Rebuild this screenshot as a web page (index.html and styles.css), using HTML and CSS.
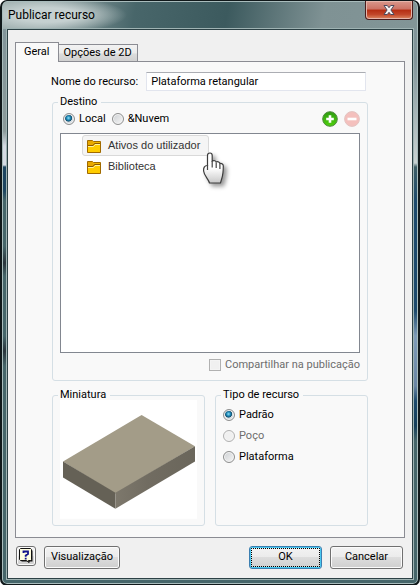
FILE: index.html
```
<!DOCTYPE html>
<html lang="pt">
<head>
  <meta charset="UTF-8">
  <title>Publicar recurso</title>
  <link rel="stylesheet" href="styles.css">
</head>
<body>
  <form class="window" onsubmit="return false">
    <header class="titlebar">
      <h1>Publicar recurso</h1>
      <button type="button" class="close" aria-label="Fechar">
        <svg width="12" height="10" viewBox="0 0 12 10"><path d="M1 .5h3.300L6 2.700 7.700.5H11L7.900 5 11 9.500H7.700L6 7.300 4.300 9.500H1L4.100 5z" fill="#f4f4f4" stroke="#4e4a5c"/></svg>
      </button>
    </header>

    <main class="client">
      <nav class="tabs">
        <button type="button" class="tab active">Geral</button>
        <button type="button" class="tab">Opções de 2D</button>
      </nav>

      <div class="panel">
        <div class="name-row">
          <label for="name">Nome do recurso:</label>
          <input type="text" id="name" value="Plataforma retangular">
        </div>

        <fieldset class="target">
          <legend>Destino</legend>
          <div class="target-bar">
            <label class="option"><input type="radio" name="target" checked>Local</label>
            <label class="option"><input type="radio" name="target">&amp;Nuvem</label>
            <button type="button" class="round add" aria-label="Adicionar">
              <svg width="16" height="16" viewBox="0 0 16 16">
                <defs><linearGradient id="green" x2="0" y2="1"><stop stop-color="#2f9c12"/><stop offset="1" stop-color="#4fd00c"/></linearGradient></defs>
                <circle cx="8" cy="8" r="7.300" fill="url(#green)" stroke="#4d8a3c"/>
                <path d="M8 4.200v7.600M4.200 8h7.600" stroke="#fff" stroke-width="2.600"/>
              </svg>
            </button>
            <button type="button" class="round" aria-label="Remover" disabled>
              <svg width="16" height="16" viewBox="0 0 16 16">
                <circle cx="8" cy="8" r="7.400" fill="#f4c0bd" stroke="#e3c4c2"/>
                <path d="M3.500 8h9" stroke="#fff" stroke-width="2.600"/>
              </svg>
            </button>
          </div>
          <ul class="list">
            <li class="hover">
              <svg width="14" height="14" viewBox="0 0 14 14"><path d="M.5 1.500h5l1 1h7v11H.5z" fill="#fc0" stroke="#a06a00"/><path d="M1 2h4.500l1 1.500H13v2H7.500L6.500 7H1z" fill="#e8a800"/><path d="M1 7.500h5.500l1.500-2h5" fill="none" stroke="#fff3a0"/><path d="M1 6.500h5l1.500-2H13" fill="none" stroke="#8c5a00"/></svg>
              Ativos do utilizador
              <svg class="hand" width="28" height="38" viewBox="0 0 28 38">
                <defs><linearGradient id="skin" x2="0" y2="1"><stop offset=".5" stop-color="#fff"/><stop offset="1" stop-color="#c8c8c8"/></linearGradient></defs>
                <path d="M8 3c1.600 0 2.200 1 2.200 2.600V11c2-.9 3.600-.2 4 1 2-.7 3.300 0 3.700 1.500 2-.3 3.400.5 3.400 2.500 0 6-.2 8.500-1.500 12.500L18.500 33H7.500C6.500 29 2 25.500 1.600 21c-.2-3 .6-5.500 3.900-5.500V5.600C5.500 4 6.300 3 8 3z" fill="url(#skin)" stroke="#3c3c3c" stroke-width="1.200"/>
                <path d="M5.500 15v5M10.200 11v6.500M14.200 12.500v5.500M17.900 14v5" fill="none" stroke="#444" stroke-width="1.200"/>
              </svg>
            </li>
            <li>
              <svg width="14" height="14" viewBox="0 0 14 14"><path d="M.5 1.500h5l1 1h7v11H.5z" fill="#fc0" stroke="#a06a00"/><path d="M1 2h4.500l1 1.500H13v2H7.500L6.500 7H1z" fill="#e8a800"/><path d="M1 7.500h5.500l1.500-2h5" fill="none" stroke="#fff3a0"/><path d="M1 6.500h5l1.500-2H13" fill="none" stroke="#8c5a00"/></svg>
              Biblioteca
            </li>
          </ul>
          <div class="share">
            <label class="option off"><input type="checkbox" disabled>Compartilhar na publicação</label>
          </div>
        </fieldset>

        <div class="columns">
          <fieldset class="thumb">
            <legend>Miniatura</legend>
            <svg viewBox="0 0 136 118">
              <defs>
                <linearGradient id="front" x2="1" y2="0"><stop stop-color="#7d786c"/><stop offset=".4" stop-color="#716c61"/><stop offset="1" stop-color="#6a665b"/></linearGradient>
              </defs>
              <path fill="#fff" d="M0 0h136v118H0z"/>
              <path d="M3 61 81 15l53 31-79 47z" fill="#a39c88"/>
              <path d="M3 61v16l52 31V92z" fill="#656156"/>
              <path d="M55 92v16l79-47V46z" fill="url(#front)"/>
            </svg>
          </fieldset>
          <fieldset class="type">
            <legend>Tipo de recurso</legend>
            <label class="option"><input type="radio" name="type" checked>Padrão</label>
            <label class="option off"><input type="radio" name="type" disabled>Poço</label>
            <label class="option"><input type="radio" name="type">Plataforma</label>
          </fieldset>
        </div>
      </div>

      <footer class="actions">
        <button type="button" class="btn help" aria-label="Ajuda">
          <svg width="14" height="15" viewBox="0 0 14 15"><path d="M2.500 2.500h11v11h-3v1l-2-1h-6z" fill="#111"/><path d="M1.500.5h10l1 1v10l-1 1h-2l.5 2-2.500-2h-6l-1-1v-10z" fill="#fffde0" stroke="#111"/><path d="M4.500 5V3.500h4.500v2.500L6.700 7.500v1.200M6.700 9.700v1.800" fill="none" stroke="#14148c" stroke-width="1.800"/></svg>
        </button>
        <button type="button" class="btn preview">Visualização</button>
        <button type="submit" class="btn ok">OK</button>
        <button type="button" class="btn">Cancelar</button>
      </footer>
    </main>
  </form>
</body>
</html>
```
FILE: styles.css
```
* {
  box-sizing: border-box;
}
body {
  margin: 0;
  background: #fff;
  color: #000;
  font: 11px/16px Roboto, "Liberation Sans", sans-serif;
}
button, input {
  font: inherit;
  color: inherit;
  margin: 0;
}
svg {
  display: block;
}

/* window frame */
.window {
  display: flex;
  flex-direction: column;
  min-height: 100vh;
  padding: 0 5px 5px;
  border: 2px solid #10181a;
  border-top-width: 1px;
  border-radius: 7px;
  box-shadow: inset 0 0 0 1px #a9bcbc;
  background:
    radial-gradient(ellipse 80px 18px at 45px 14px, #c5d0d0 40%, transparent) no-repeat 0 0 / 100% 28px,
    linear-gradient(100deg, #9aabab 10%, #48666a 32%, #3c5a5e 54%, #7f9294 77%, #829597) no-repeat 0 0 / 100% 28px,
    linear-gradient(#82959a 29px, #8b9a9a 130px, #d5dbe4 145px, #d5dbe4 164px, #1d4560 166px, #1d4560 190px, #46666a 200px, #46666a 245px, #2a353c 262px, #46666a 275px, #46666a 335px, #2a353c 350px, #46666a 365px) no-repeat 0 0 / 7px 100%,
    linear-gradient(#82959a 60px, #c9d2d2 162px, #3e5e66 166px, #1d4a6c 200px, #1d4a6c 310px, #7f9cb8 335px, #6a86a4 385px, #1d4a6c 400px, #163f5a 425px, #46666a 440px) no-repeat 100% 0 / 7px 100%,
    #46666a;
}
.titlebar {
  display: flex;
  justify-content: space-between;
  height: 28px;
}
.titlebar h1 {
  margin: 6px 0 0 1px;
  font-size: 12px;
  line-height: 16px;
  font-weight: normal;
}
.close {
  display: flex;
  align-items: center;
  justify-content: center;
  width: 48px;
  height: 19px;
  padding: 0;
  border: 1px solid #4a1c1c;
  border-top: 0;
  border-radius: 0 0 4px 4px;
  background: linear-gradient(#d9988c, #cc7264 45%, #b52d12 50%, #c2472a 75%, #dc8a64);
  box-shadow: inset 0 0 0 1px #e6b5aa;
}
.client {
  flex: 1;
  display: flex;
  flex-direction: column;
  padding: 12px 7px 9px;
  border: 1px solid #2c4145;
  background: #f0f0f0;
  box-shadow: 0 0 0 1px #9fb3b3;
}

/* tabs */
.tabs {
  display: flex;
  align-items: flex-end;
  height: 19px;
}
.tab {
  height: 17px;
  padding: 0 5px;
  border: 1px solid #8b8c93;
  border-bottom: 0;
  background: linear-gradient(#f2f2f2, #ebebeb 50%, #dcdcdc 55%, #d0d0d0);
  line-height: 16px;
}
.tab.active {
  position: relative;
  height: 20px;
  margin: 0 -1px -1px 0;
  padding: 0 8px 2px;
  background: #f9f9f9;
}
.panel {
  flex: 1;
  padding: 10px 36px 11px;
  border: 1px solid #8b8c93;
  background: #f9f9f9;
}
.name-row {
  display: flex;
  align-items: center;
  justify-content: flex-end;
  gap: 8px;
  padding-right: 2px;
  margin-bottom: 3px;
  white-space: nowrap;
}
.name-row input {
  flex: none;
  width: 70%;
  height: 19px;
  padding: 0 4px;
  border: 1px solid #e2e5ee;
  border-top-color: #abadb3;
  background: #fff;
}

/* group boxes */
fieldset {
  min-width: 0;
  margin: 0;
  padding: 0 7px;
  border: 1px solid #d5dfe5;
  border-radius: 3px;
}
legend {
  padding: 0 4px 0 2px;
  margin-left: -2px;
}
.target {
  padding-bottom: 7px;
}
.target-bar {
  display: flex;
  align-items: center;
  gap: 6px;
  height: 18px;
  padding-left: 3px;
}
.option {
  display: flex;
  align-items: center;
  gap: 4px;
}
.option.off {
  color: #6d6d6d;
}
input[type="radio"], input[type="checkbox"] {
  appearance: none;
  width: 12px;
  height: 12px;
  border: 1px solid #8e8f8f;
  background: linear-gradient(135deg, #cdd0d3, #f6f6f6);
  box-shadow: inset 0 0 0 1px #f4f4f4;
}
input[type="radio"] {
  border-radius: 50%;
}
input[type="radio"]:checked {
  background: radial-gradient(circle at 45% 40%, #8fe0f8, #1c86b4 25%, #14506f 40%, #d5dbe0 48%);
}
input:disabled {
  border-color: #b1b1b1;
  background: #f0f0f0;
}
.round {
  padding: 0;
  border: 0;
  background: none;
}
.add {
  margin-left: auto;
}
.list {
  min-height: 220px;
  margin: 5px 0 4px;
  padding: 1px 0;
  border: 1px solid #828790;
  background: #fff;
  list-style: none;
  color: #333;
  font: 11px/19px "Liberation Sans", Arial, sans-serif;
}
.list li {
  position: relative;
  display: flex;
  align-items: center;
  gap: 7px;
  width: 127px;
  height: 21px;
  margin-left: 21px;
  padding-left: 4px;
  border: 1px solid transparent;
  border-radius: 3px;
  white-space: nowrap;
}
.list .hover {
  border-color: #d9d9d9;
  background: #f5f5f5;
}
.hand {
  position: absolute;
  left: 119px;
  top: 14px;
  filter: drop-shadow(3px 3px 2px #999);
}
.share {
  display: flex;
  justify-content: flex-end;
}
.columns {
  display: grid;
  grid-template-columns: 1fr 1fr;
  gap: 10px;
  margin-top: 6px;
}
.thumb svg {
  width: 100%;
  margin: -3px 0 6px;
}
.thumb legend {
  position: relative;
}
.type .option {
  height: 21px;
}
.type legend + .option {
  margin-top: 1px;
}

/* bottom buttons */
.actions {
  display: flex;
  align-items: flex-start;
  gap: 8px;
  padding: 8px 2px 0 1px;
}
.btn {
  width: 73px;
  height: 23px;
  padding: 0;
  border: 1px solid #707070;
  border-radius: 3px;
  background: linear-gradient(#f3f3f3, #ebebeb 49%, #dddddd 50%, #cfcfcf);
  box-shadow: inset 0 0 0 1px #fbfbfb;
}
.help {
  display: flex;
  align-items: center;
  justify-content: center;
  width: 20px;
  height: 20px;
}
.preview {
  width: 76px;
}
.ok {
  margin-left: auto;
  border-color: #3c7fb1;
  box-shadow: inset 0 0 0 1px #48c8f0;
  outline: 1px dotted #000;
  outline-offset: -3px;
}
```
